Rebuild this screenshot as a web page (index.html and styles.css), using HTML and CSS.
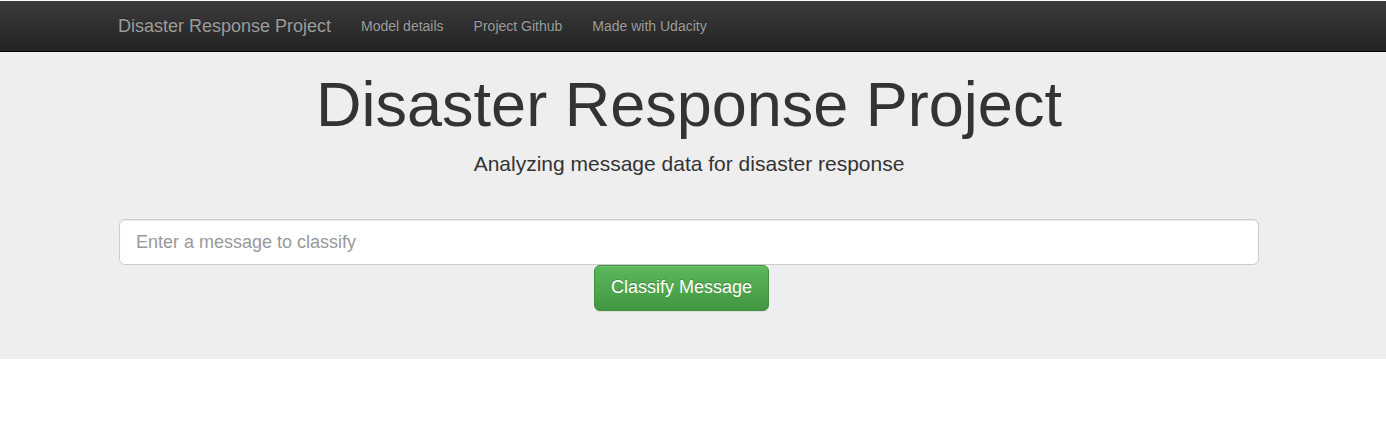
FILE: index.html
```html
<!DOCTYPE html>
<html lang="en">
<head>
<meta charset="utf-8">
<title>Disasters</title>
<link rel="stylesheet" href="styles.css">
</head>
<body>
<nav class="navbar">
  <div class="container nav-inner">
    <a class="brand" href="#">Disaster Response Project</a>
    <ul class="nav-links">
      <li><a href="#">Model details</a></li>
      <li><a href="#">Project Github</a></li>
      <li><a href="#">Made with Udacity</a></li>
    </ul>
  </div>
</nav>
<section class="jumbotron">
  <div class="container">
    <h1 class="title">Disaster Response Project</h1>
    <p class="lead">Analyzing message data for disaster response</p>
    <form class="classify-form">
      <input class="msg-input" type="text" name="query" placeholder="Enter a message to classify">
      <div class="btn-row">
        <button type="submit" class="btn-success">Classify Message</button>
      </div>
    </form>
  </div>
</section>
</body>
</html>
```
FILE: styles.css
```css
html, body {
  margin: 0;
  padding: 0;
}
body {
  font-family: "Liberation Sans", Arial, Helvetica, sans-serif;
  font-size: 14px;
  line-height: 1.42857;
  color: #333;
  background: #fff;
  padding-top: 1px;
}
.container {
  width: 1140px;
  margin-left: calc((100% - 1140px) / 2 - 4px);
}
.navbar {
  height: 50px;
  background-image: linear-gradient(to bottom, #3c3c3c 0%, #222 100%);
  border-bottom: 1px solid #080808;
}
.nav-inner {
  display: flex;
  align-items: center;
  height: 50px;
}
.brand {
  font-size: 18px;
  line-height: 20px;
  color: #9d9d9d;
  text-decoration: none;
  text-shadow: 0 -1px 0 rgba(0,0,0,.25);
  margin-left: -1px;
  padding: 15px 0;
}
.nav-links {
  display: flex;
  list-style: none;
  margin: 0 0 0 15px;
  padding: 0;
}
.nav-links a {
  display: block;
  padding: 15px;
  line-height: 20px;
  font-size: 14px;
  color: #9d9d9d;
  text-decoration: none;
  text-shadow: 0 -1px 0 rgba(0,0,0,.25);
}
.jumbotron {
  background: #eee;
  padding: 18px 0 48px;
}
.title {
  margin: 0;
  font-size: 63px;
  font-weight: 500;
  line-height: 1.1;
  text-align: center;
  color: #333;
}
.lead {
  margin: 10px 0 40px;
  font-size: 21px;
  line-height: 30px;
  text-align: center;
  color: #333;
}
.classify-form {
  margin: 0;
}
.msg-input {
  display: block;
  box-sizing: border-box;
  width: 100%;
  height: 46px;
  padding: 10px 16px;
  font-family: inherit;
  font-size: 18px;
  line-height: 1.33;
  color: #555;
  background: #fff;
  border: 1px solid #ccc;
  border-radius: 6px;
  box-shadow: inset 0 1px 1px rgba(0,0,0,.075);
  outline: none;
}
.msg-input::placeholder {
  color: #999;
}
.btn-row {
  display: flex;
  padding-left: 475px;
}
.btn-success {
  box-sizing: border-box;
  height: 46px;
  width: 175px;
  padding: 10px 0;
  white-space: nowrap;
  font-family: inherit;
  font-size: 18px;
  line-height: 1.33;
  color: #fff;
  background-image: linear-gradient(to bottom, #5cb85c 0%, #419641 100%);
  border: 1px solid #3e8f3e;
  border-radius: 6px;
  text-shadow: 0 -1px 0 rgba(0,0,0,.2);
  box-shadow: inset 0 1px 0 rgba(255,255,255,.15), 0 1px 1px rgba(0,0,0,.075);
  cursor: pointer;
}
```
